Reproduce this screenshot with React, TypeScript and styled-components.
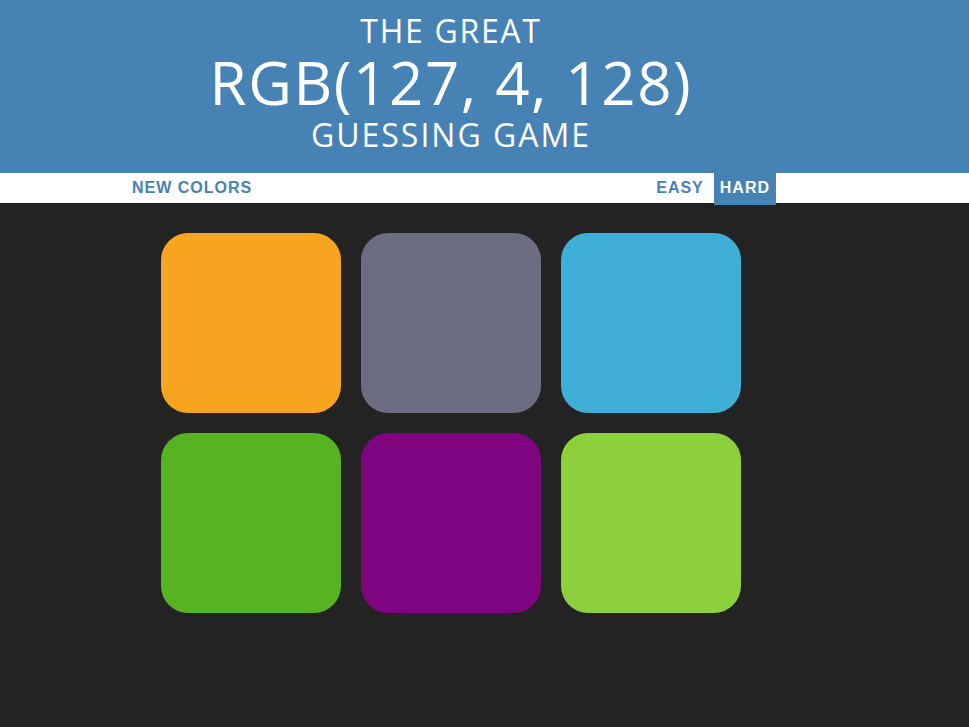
import React from "react";
import styled, { createGlobalStyle } from "styled-components";

const GlobalStyle = createGlobalStyle`
  html, body {
    margin: 0;
    padding: 0;
    background: #232323;
  }
  body {
    font-family: "Open Sans", "Liberation Sans", sans-serif;
  }
`;

const Header = styled.header`
  background: #4682b4;
  color: #ffffff;
`;

const Column = styled.div`
  width: 902px;
`;

const Title = styled.h1`
  margin: 0;
  padding: 13px 0 21px;
  text-align: center;
  font-weight: 400;
  text-transform: uppercase;
  font-family: "Open Sans", "Liberation Sans", sans-serif;
`;

const TitleLine = styled.span<{ $size: number; $lh: number; $ls: number }>`
  display: block;
  font-size: ${(p) => p.$size}px;
  line-height: ${(p) => p.$lh}px;
  letter-spacing: ${(p) => p.$ls}px;
`;

const Stripe = styled.nav`
  background: #ffffff;
  height: 30px;
`;

const StripeInner = styled.div`
  width: 902px;
  height: 100%;
  display: flex;
  align-items: flex-start;
  padding-left: 126px;
  box-sizing: border-box;
`;

const Button = styled.button<{ $selected?: boolean }>`
  border: none;
  margin: 0;
  padding: 0 6px ${(p) => (p.$selected ? "2px" : "0")};
  height: ${(p) => (p.$selected ? "32px" : "30px")};
  background: ${(p) => (p.$selected ? "#4682b4" : "transparent")};
  color: ${(p) => (p.$selected ? "#ffffff" : "#4682b4")};
  font-family: "Liberation Sans", Arial, sans-serif;
  font-size: 16px;
  font-weight: 700;
  letter-spacing: 1px;
  text-transform: uppercase;
  cursor: pointer;
  outline: none;
  position: relative;
  z-index: 1;
`;

const Message = styled.span`
  flex: 0 0 392px;
`;

const ModeGap = styled.span`
  flex: 0 0 4px;
`;

const Board = styled.main`
  width: 902px;
`;

const Grid = styled.div`
  width: 600px;
  box-sizing: border-box;
  margin: 20px auto;
  padding: 10px;
  display: grid;
  grid-template-columns: repeat(3, 180px);
  grid-auto-rows: 180px;
  gap: 20px;
`;

const Square = styled.div<{ $color: string }>`
  background: ${(p) => p.$color};
  border-radius: 27px;
`;

const colors = [
  "rgb(247, 165, 32)",
  "rgb(108, 108, 130)",
  "rgb(63, 175, 216)",
  "rgb(87, 179, 34)",
  "rgb(127, 4, 128)",
  "rgb(140, 208, 60)",
];

export default function App() {
  return (
    <>
      <GlobalStyle />
      <Header>
        <Column>
          <Title>
            <TitleLine $size={32} $lh={35} $ls={1.7}>
              The Great
            </TitleLine>
            <TitleLine $size={60} $lh={69} $ls={1.6}>
              RGB(127, 4, 128)
            </TitleLine>
            <TitleLine $size={32} $lh={35} $ls={2}>
              Guessing Game
            </TitleLine>
          </Title>
        </Column>
      </Header>
      <Stripe>
        <StripeInner>
          <Button>New Colors</Button>
          <Message />
          <Button>Easy</Button>
          <ModeGap />
          <Button $selected>Hard</Button>
        </StripeInner>
      </Stripe>
      <Board>
        <Grid>
          {colors.map((c, i) => (
            <Square key={i} $color={c} />
          ))}
        </Grid>
      </Board>
    </>
  );
}
